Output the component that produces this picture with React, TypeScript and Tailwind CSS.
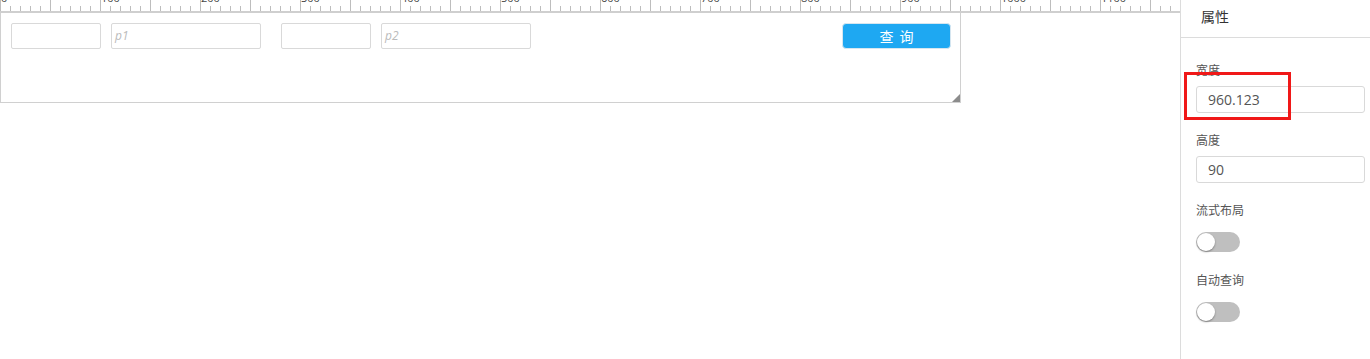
import React from 'react';

const font = "font-['Open_Sans','Noto_Sans_CJK_SC',sans-serif]";

function Ruler() {
  const ticks = [];
  for (let x = 0; x <= 1180; x += 10) {
    const major = x % 50 === 0;
    ticks.push(
      <line key={x} x1={x + 0.5} x2={x + 0.5} y1={major ? 0 : 6} y2={11} stroke="#bdbdbd" strokeWidth={1} />
    );
  }
  const labels = [];
  for (let x = 0; x < 1180; x += 100) {
    labels.push(
      <text key={x} x={x + 1} y={2} fontSize={11} fill="#444" fontFamily="Open Sans, sans-serif">
        {x}
      </text>
    );
  }
  return (
    <svg width="1180" height="13" className="block">
      {ticks}
      {labels}
      <rect x={0} y={11} width={1180} height={2} fill="#cfcfcf" />
    </svg>
  );
}

function Toggle() {
  return (
    <div className="relative h-5 w-11 rounded-full bg-[#bfbfbf]">
      <div className="absolute left-[1px] top-[1px] h-[18px] w-[18px] rounded-full bg-white shadow-[0_1px_2px_rgba(0,0,0,0.35)]" />
    </div>
  );
}

function Field({ label, value, highlight }: { label: string; value?: string; highlight?: boolean }) {
  return (
    <div className="relative">
      <div className="text-[12px] leading-4 text-[#555]">{label}</div>
      <div className="mt-[7px] flex h-[27px] items-center rounded-[3px] border border-[#d9d9d9] px-[11px] text-[14px] text-[#555]">
        {value}
      </div>
      {highlight && (
        <div className="absolute left-[-12px] top-[9px] h-[48px] w-[107px] border-[3px] border-[#f01818]" />
      )}
    </div>
  );
}

export default function App() {
  return (
    <div className={`flex h-[359px] w-[1370px] overflow-hidden bg-white ${font}`}>
      <div className="w-[1180px] shrink-0">
        <Ruler />
        <div className="relative h-[90px] w-[961px] border-b border-l border-r border-[#d0d0d0]">
          <div className="flex items-center pl-[10px] pt-[10px]">
            <div className="h-[26px] w-[90px] rounded-[2px] border border-[#d9d9d9]" />
            <div className="ml-[10px] flex h-[26px] w-[150px] items-center rounded-[2px] border border-[#d9d9d9] px-[3px] text-[12px] italic text-[#bbb]">
              p1
            </div>
            <div className="ml-[20px] h-[26px] w-[90px] rounded-[2px] border border-[#d9d9d9]" />
            <div className="ml-[10px] flex h-[26px] w-[150px] items-center rounded-[2px] border border-[#d9d9d9] px-[3px] text-[12px] italic text-[#bbb]">
              p2
            </div>
            <div className="ml-[311px] flex h-[26px] w-[109px] items-center justify-center rounded-[4px] border border-[#d6e6f0] bg-[#1ea8f2] pl-[6px] text-[14px] tracking-[6px] text-white">
              查询
            </div>
          </div>
          <div className="absolute bottom-0 right-0 h-0 w-0 border-b-[8px] border-l-[8px] border-b-[#8c8c8c] border-l-transparent" />
        </div>
      </div>
      <div className="flex-1 border-l border-[#dcdcdc]">
        <div className="h-[38px] border-b border-[#dcdcdc] pl-[20px] pt-[6px] text-[14px] text-[#333]">属性</div>
        <div className="flex flex-col gap-[20px] pl-[15px] pr-[5px] pt-[25px]">
          <Field label="宽度" value="960.123" highlight />
          <Field label="高度" value="90" />
          <div>
            <div className="text-[12px] leading-4 text-[#555]">流式布局</div>
            <div className="mt-[13px]"><Toggle /></div>
          </div>
          <div className="mt-[1px]">
            <div className="text-[12px] leading-4 text-[#555]">自动查询</div>
            <div className="mt-[13px]"><Toggle /></div>
          </div>
        </div>
      </div>
    </div>
  );
}
